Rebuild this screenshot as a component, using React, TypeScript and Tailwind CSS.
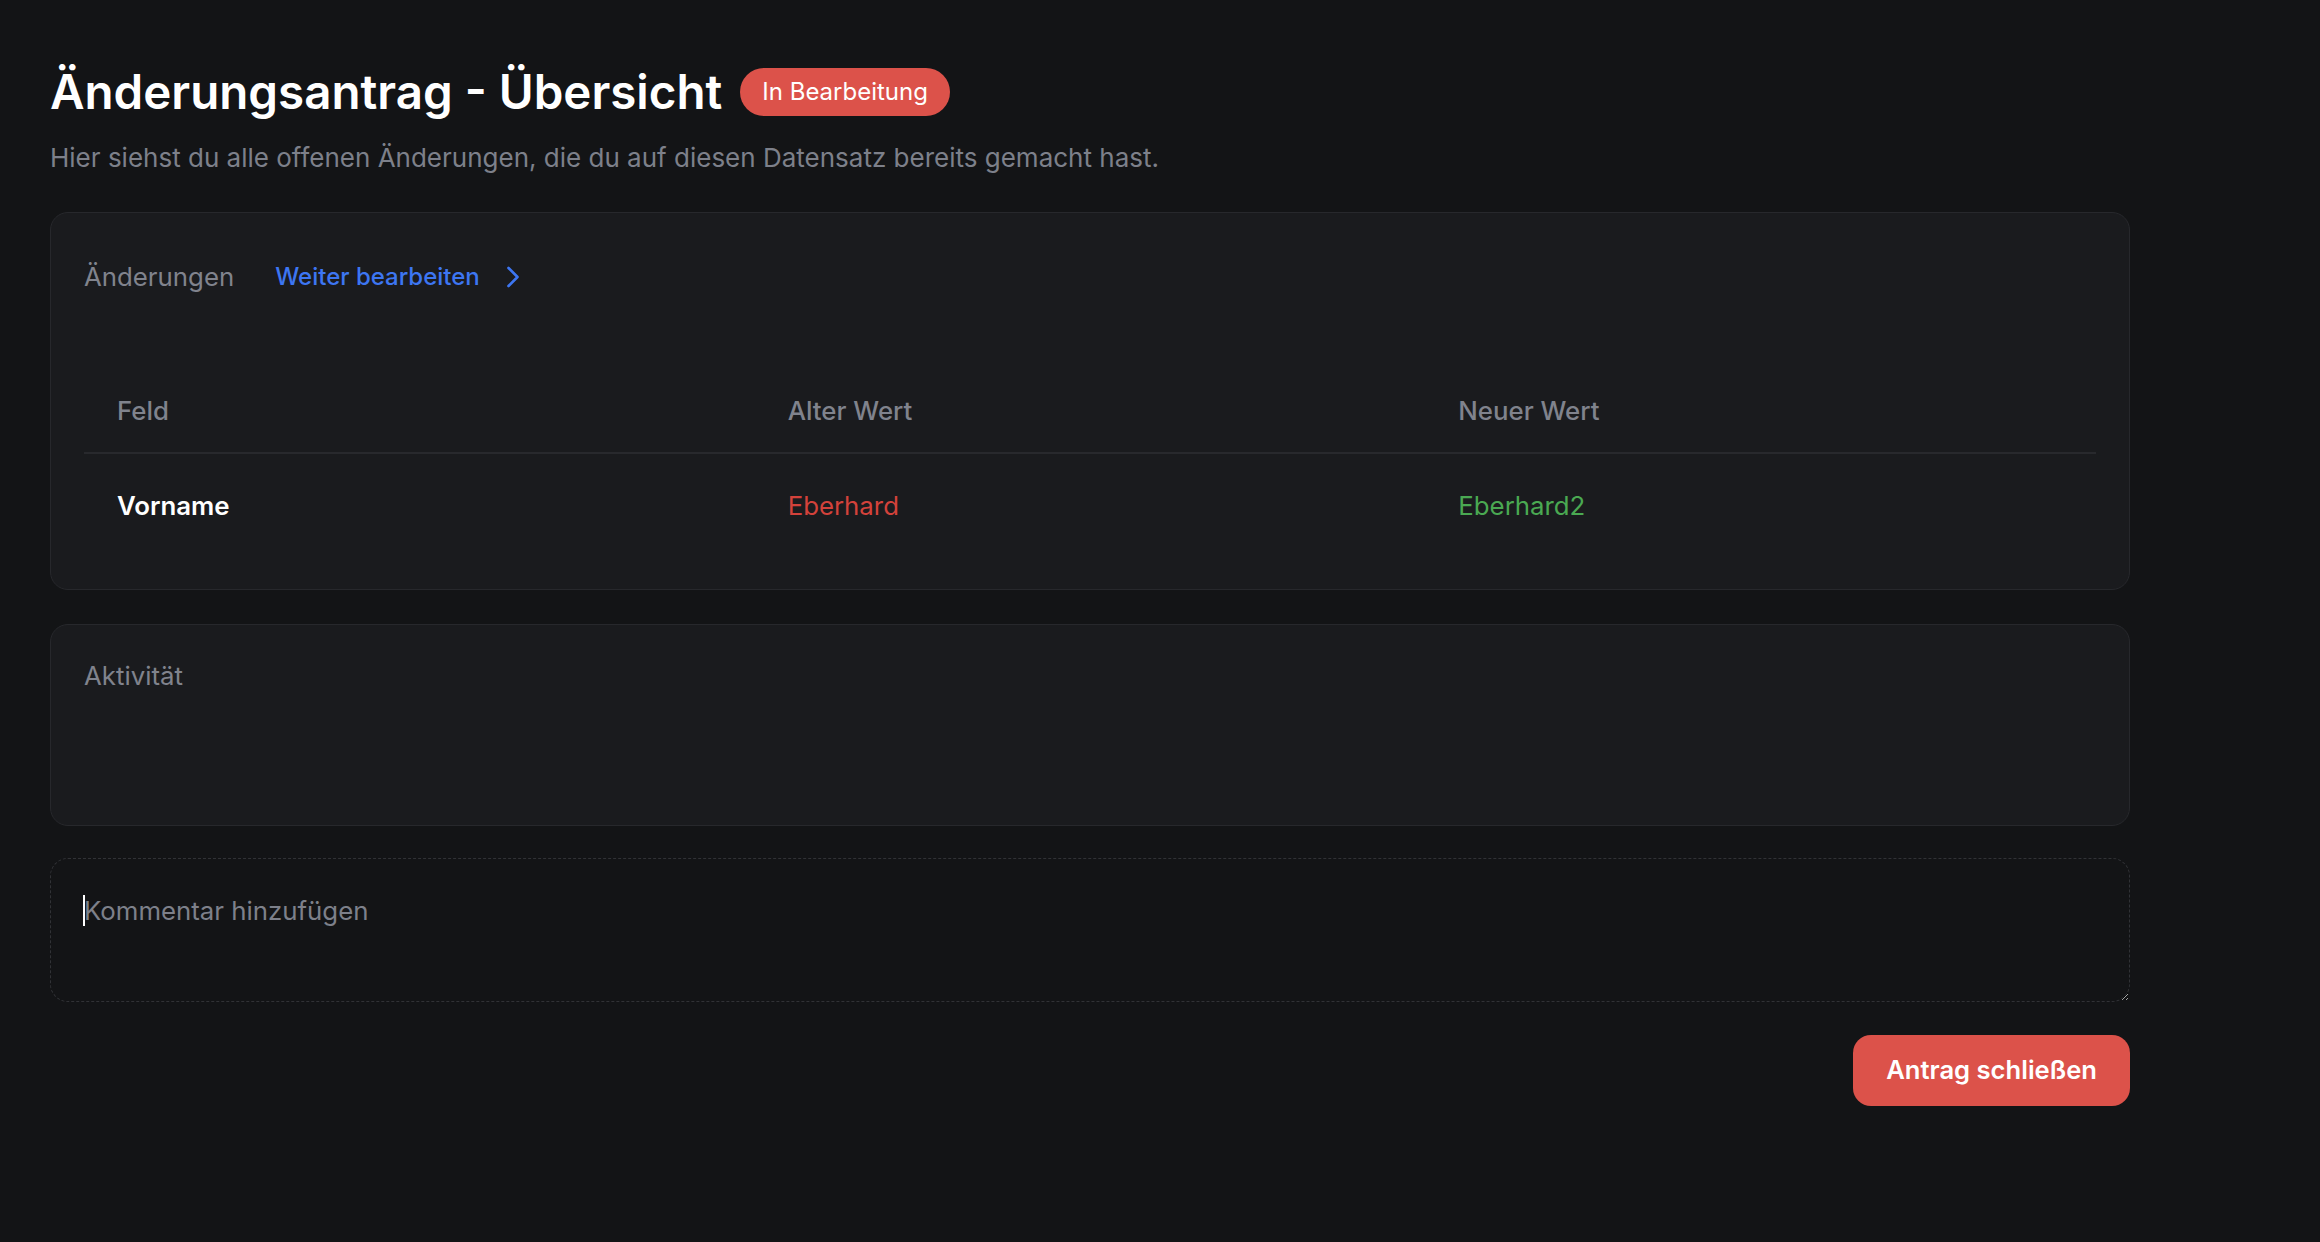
import { ChevronRight } from "lucide-react";

const changes = [{ field: "Vorname", oldValue: "Eberhard", newValue: "Eberhard2" }];

export default function App() {
    return (
        <div className="min-h-screen bg-[#131416] font-['Inter',sans-serif] pl-[50px] pt-[65px]">
            <div className="w-[2080px]">
                <div className="flex items-center gap-[18px]">
                    <h1 className="text-[47.5px] leading-[53px] font-semibold text-white">
                        Änderungsantrag - Übersicht
                    </h1>
                    <span className="h-[48px] px-[22px] flex items-center rounded-full bg-[#dc524a] text-white text-[24px]">
                        In Bearbeitung
                    </span>
                </div>
                <p className="mt-[22px] text-[26px] leading-[36px] text-[#7d808a]">
                    Hier siehst du alle offenen Änderungen, die du auf diesen Datensatz bereits gemacht hast.
                </p>

                <div className="mt-[36px] rounded-[18px] border-[1.5px] border-[#27282c] bg-[#1a1b1e] px-[33px] pt-[32px] pb-[31px]">
                    <div className="flex items-center h-[64px]">
                        <span className="text-[25.8px] text-[#80838d]">Änderungen</span>
                        <button className="ml-[41px] flex items-center gap-[15px] text-[24px] font-medium text-[#3d76f2]">
                            Weiter bearbeiten
                            <ChevronRight size={36} strokeWidth={1.75} />
                        </button>
                    </div>

                    <table className="mt-[61px] w-full table-fixed border-collapse">
                        <thead>
                            <tr className="border-b-2 border-[#28292d]">
                                <th className="text-left pl-[33px] py-[21px] text-[25.8px] leading-[40px] font-medium text-[#80838d]">Feld</th>
                                <th className="text-left pl-[33px] py-[21px] text-[25.8px] leading-[40px] font-medium text-[#80838d]">Alter Wert</th>
                                <th className="text-left pl-[33px] py-[21px] text-[25.8px] leading-[40px] font-medium text-[#80838d]">Neuer Wert</th>
                            </tr>
                        </thead>
                        <tbody>
                            {changes.map((c) => (
                                <tr key={c.field}>
                                    <td className="pl-[33px] py-[32px] text-[25.8px] leading-[40px] font-semibold text-white">{c.field}</td>
                                    <td className="pl-[33px] py-[32px] text-[25.8px] leading-[40px] text-[#d3423b]">{c.oldValue}</td>
                                    <td className="pl-[33px] py-[32px] text-[25.8px] leading-[40px] text-[#4aa952]">{c.newValue}</td>
                                </tr>
                            ))}
                        </tbody>
                    </table>
                </div>

                <div className="mt-[34px] h-[202px] rounded-[18px] border-[1.5px] border-[#27282c] bg-[#1a1b1e] px-[33px] pt-[31px]">
                    <span className="text-[25.8px] leading-[40px] text-[#80838d]">Aktivität</span>
                </div>

                <div className="relative mt-[32px]">
                    <textarea
                        placeholder="Kommentar hinzufügen"
                        className="block w-full h-[144px] rounded-[18px] border-[1.5px] border-dashed border-[#313236] bg-transparent px-[33px] pt-[32px] text-[25.8px] leading-[40px] text-white caret-white placeholder:text-[#7d808a] outline-none"
                    />
                    <span className="absolute left-[33px] top-[37px] w-[2px] h-[31px] bg-white pointer-events-none" />
                </div>

                <div className="mt-[33px] flex justify-end">
                    <button className="h-[71px] px-[33px] rounded-[18px] bg-[#dc524a] text-white text-[25.6px] font-semibold">
                        Antrag schließen
                    </button>
                </div>
            </div>
        </div>
    );
}
